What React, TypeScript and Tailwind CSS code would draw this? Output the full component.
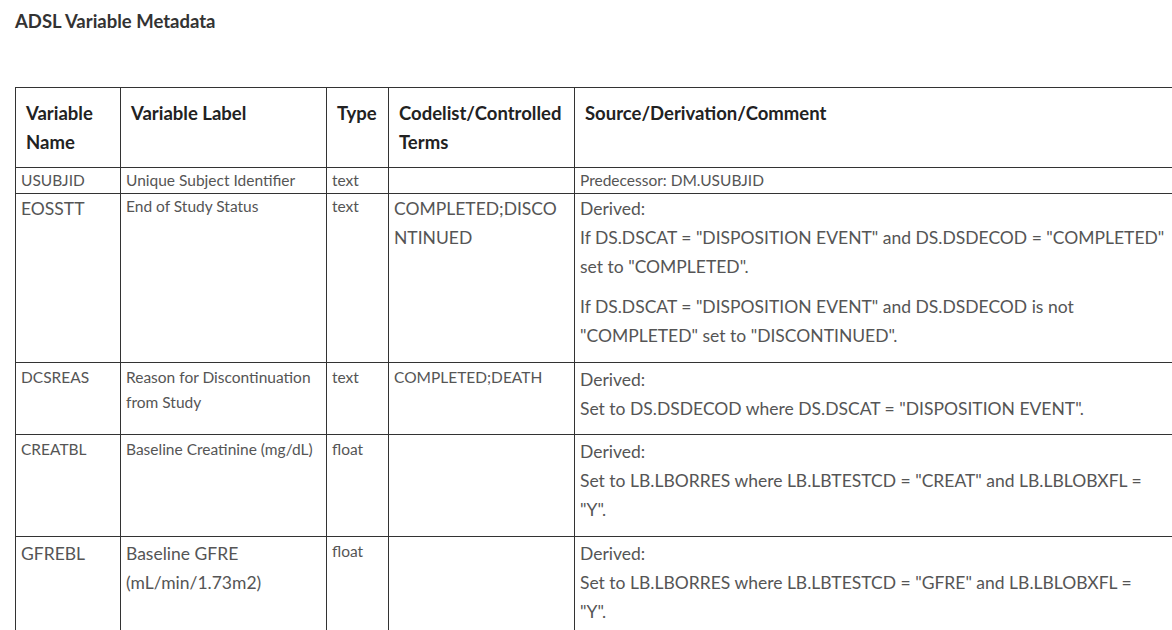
type Row = {
  name: string;
  nameBig?: boolean;
  label: string[];
  labelBig?: boolean;
  type: string;
  codes: string[];
  codesBig?: boolean;
  source: string[][];
  sourceBig?: boolean;
};

const rows: Row[] = [
  {
    name: 'USUBJID',
    label: ['Unique Subject Identifier'],
    type: 'text',
    codes: [],
    source: [['Predecessor: DM.USUBJID']],
  },
  {
    name: 'EOSSTT',
    nameBig: true,
    label: ['End of Study Status'],
    type: 'text',
    codes: ['COMPLETED;DISCO', 'NTINUED'],
    codesBig: true,
    sourceBig: true,
    source: [
      [
        'Derived:',
        'If DS.DSCAT = "DISPOSITION EVENT" and DS.DSDECOD = "COMPLETED"',
        'set to "COMPLETED".',
      ],
      ['If DS.DSCAT = "DISPOSITION EVENT" and DS.DSDECOD is not', '"COMPLETED" set to "DISCONTINUED".'],
    ],
  },
  {
    name: 'DCSREAS',
    label: ['Reason for Discontinuation', 'from Study'],
    type: 'text',
    codes: ['COMPLETED;DEATH'],
    sourceBig: true,
    source: [['Derived:', 'Set to DS.DSDECOD where DS.DSCAT = "DISPOSITION EVENT".']],
  },
  {
    name: 'CREATBL',
    label: ['Baseline Creatinine (mg/dL)'],
    type: 'float',
    codes: [],
    sourceBig: true,
    source: [['Derived:', 'Set to LB.LBORRES where LB.LBTESTCD = "CREAT" and LB.LBLOBXFL =', '"Y".']],
  },
  {
    name: 'GFREBL',
    nameBig: true,
    label: ['Baseline GFRE', '(mL/min/1.73m2)'],
    labelBig: true,
    type: 'float',
    codes: [],
    sourceBig: true,
    source: [['Derived:', 'Set to LB.LBORRES where LB.LBTESTCD = "GFRE" and LB.LBLOBXFL =', '"Y".']],
  },
];

function Lines({ lines, big }: { lines: string[]; big?: boolean }) {
  return (
    <div className={big ? 'text-[17.5px] leading-[29px]' : 'text-[15.5px] leading-[25px]'}>
      {lines.map((l, i) => (
        <div key={i} className="whitespace-nowrap">
          {l}
        </div>
      ))}
    </div>
  );
}

const th = 'border border-[#333] px-[10px] pt-[11px] pb-[10px] text-left align-top font-bold text-[18.5px] leading-[29px] text-[#222]';
const td = 'border border-[#333] pl-[5px] pr-1 align-top text-[#555]';

// per-row vertical padding, tuned to the row heights
const pads = ['py-0', 'pt-0 pb-3', 'pt-0.5 pb-[11px]', 'pt-0.5 pb-3', 'pt-0.5 pb-3'];

export default function App() {
  return (
    <div className="w-[1172px] h-[630px] overflow-hidden bg-white font-['Lato','Open_Sans',sans-serif]">
      <h2 className="pl-[15px] pt-[9px] text-[18.5px] font-bold leading-6 text-[#333]">ADSL Variable Metadata</h2>
      <table className="ml-[15px] mt-[54px] w-[1180px] table-fixed border-collapse">
        <colgroup>
          <col className="w-[105px]" />
          <col className="w-[206px]" />
          <col className="w-[62px]" />
          <col className="w-[186px]" />
          <col />
        </colgroup>
        <thead>
          <tr className="h-[79px]">
            <th className={th}>
              Variable
              <br />
              Name
            </th>
            <th className={th}>Variable Label</th>
            <th className={th}>Type</th>
            <th className={th}>
              Codelist/Controlled
              <br />
              Terms
            </th>
            <th className={th}>Source/Derivation/Comment</th>
          </tr>
        </thead>
        <tbody>
          {rows.map((r, idx) => {
            const pad = pads[idx];
            return (
              <tr key={r.name}>
                <td className={`${td} ${pad}`}>
                  <Lines lines={[r.name]} big={r.nameBig} />
                </td>
                <td className={`${td} ${pad}`}>
                  <Lines lines={r.label} big={r.labelBig} />
                </td>
                <td className={`${td} ${pad}`}>
                  <Lines lines={[r.type]} />
                </td>
                <td className={`${td} ${pad}`}>
                  {r.codes.length > 0 && <Lines lines={r.codes} big={r.codesBig} />}
                </td>
                <td className={`${td} ${pad}`}>
                  <div className="flex flex-col gap-[11px]">
                    {r.source.map((p, i) => (
                      <Lines key={i} lines={p} big={r.sourceBig} />
                    ))}
                  </div>
                </td>
              </tr>
            );
          })}
        </tbody>
      </table>
    </div>
  );
}
